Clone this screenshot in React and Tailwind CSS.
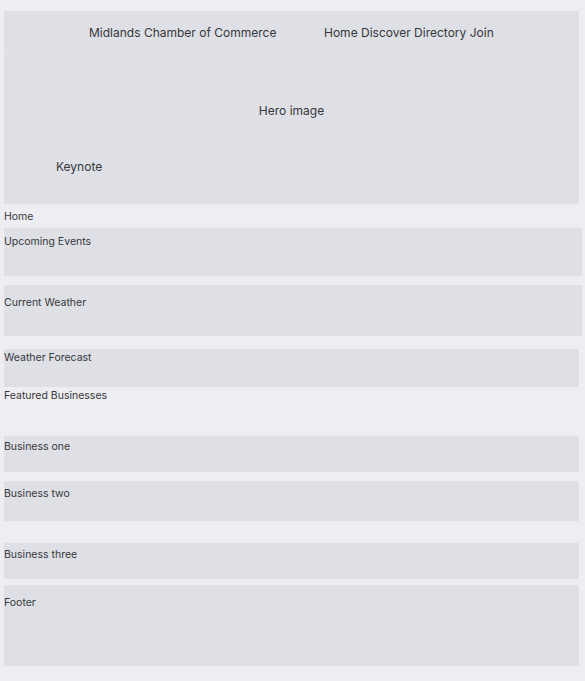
import React from 'react';

const Block = ({ label, className }) => (
  <div className={`bg-[#dee0e5] ${className}`}>
    <span>{label}</span>
  </div>
);

export default function App() {
  return (
    <div className="min-h-[681px] bg-[#eeedf2] text-[#36373b] font-['Inter','Liberation_Sans',sans-serif] pt-[11px] pb-[15px]">
      {/* Header + hero */}
      <div className="ml-[4px] mr-[6px] bg-[#dee0e5]">
        <header className="h-[43px] flex items-center text-[12px] border-b border-[#e1e3e8]">
          <div className="w-[320px] pl-[85px] pt-[1px]">Midlands Chamber of Commerce</div>
          <nav className="pt-[1px]">Home Discover Directory Join</nav>
        </header>
        <section className="h-[150px] relative text-[12px]">
          <div className="pt-[48px] text-center">Hero image</div>
          <div className="absolute left-[52px] top-[104px]">Keynote</div>
        </section>
      </div>

      <main className="text-[10.5px] leading-[14px]">
        <div className="h-[24px] pl-[4px] pt-[6px]">Home</div>
        <Block label="Upcoming Events" className="ml-[4px] mr-[3px] h-[48px] pt-[7px]" />
        <Block label="Current Weather" className="ml-[4px] mr-[3px] mt-[9px] h-[51px] pt-[11px]" />
        <Block label="Weather Forecast" className="ml-[4px] mr-[6px] mt-[13px] h-[38px] pt-[2px]" />
        <div className="h-[49px] pl-[4px] pt-[2px]">Featured Businesses</div>
        <Block label="Business one" className="ml-[4px] mr-[6px] h-[36px] pt-[4px]" />
        <Block label="Business two" className="ml-[4px] mr-[6px] mt-[9px] h-[40px] pt-[6px]" />
        <Block label="Business three" className="ml-[4px] mr-[6px] mt-[22px] h-[36px] pt-[5px]" />
        <Block label="Footer" className="ml-[4px] mr-[6px] mt-[6px] h-[81px] pt-[11px]" />
      </main>
    </div>
  );
}
